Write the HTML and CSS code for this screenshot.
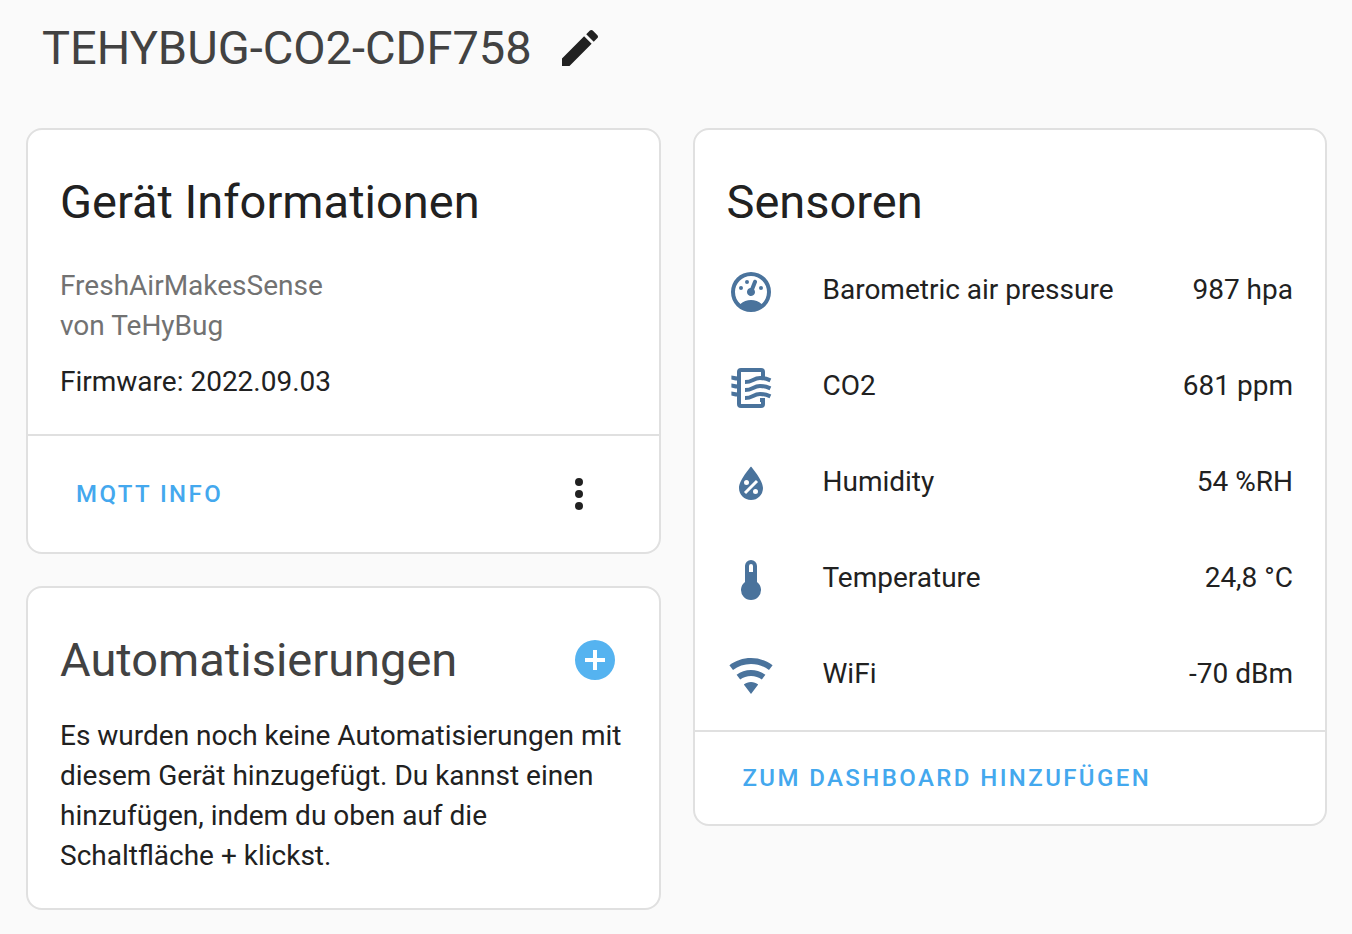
FILE: index.html
```html
<!DOCTYPE html>
<html lang="de">
<head>
<meta charset="utf-8">
<meta name="viewport" content="width=device-width, initial-scale=1">
<title>TEHYBUG-CO2-CDF758</title>
<link rel="stylesheet" href="styles.css">
</head>
<body>
<header class="page-header">
  <h1 class="page-title">TEHYBUG-CO2-CDF758</h1>
  <button class="icon-button" type="button" aria-label="Bearbeiten">
    <svg class="icon" viewBox="0 0 24 24"><path d="M20.71,7.04C21.1,6.65 21.1,6 20.71,5.63L18.37,3.29C18,2.9 17.35,2.9 16.96,3.29L15.12,5.12L18.87,8.87M3,17.25V21H6.75L17.81,9.93L14.06,6.18L3,17.25Z"/></svg>
  </button>
</header>
<main class="columns">
  <div class="column">
    <section class="card">
      <h2 class="card-title">Gerät Informationen</h2>
      <div class="card-content">
        <p class="secondary">FreshAirMakesSense<br>von TeHyBug</p>
        <p class="firmware">Firmware: 2022.09.03</p>
      </div>
      <div class="card-actions device-actions">
        <button class="text-button" type="button">MQTT INFO</button>
        <button class="icon-button menu-button" type="button" aria-label="Menü">
          <svg class="icon" viewBox="0 0 24 24"><path d="M12,16A2,2 0 0,1 14,18A2,2 0 0,1 12,20A2,2 0 0,1 10,18A2,2 0 0,1 12,16M12,10A2,2 0 0,1 14,12A2,2 0 0,1 12,14A2,2 0 0,1 10,12A2,2 0 0,1 12,10M12,4A2,2 0 0,1 14,6A2,2 0 0,1 12,8A2,2 0 0,1 10,6A2,2 0 0,1 12,4Z"/></svg>
        </button>
      </div>
    </section>
    <section class="card">
      <div class="title-row">
        <h2 class="card-title muted">Automatisierungen</h2>
        <button class="icon-button add-button" type="button" aria-label="Automatisierung hinzufügen">
          <svg class="icon" viewBox="0 0 24 24"><path d="M17,13H13V17H11V13H7V11H11V7H13V11H17M12,2A10,10 0 0,0 2,12A10,10 0 0,0 12,22A10,10 0 0,0 22,12A10,10 0 0,0 12,2Z"/></svg>
        </button>
      </div>
      <p class="card-content">Es wurden noch keine Automatisierungen mit diesem Gerät hinzugefügt. Du kannst einen hinzufügen, indem du oben auf die Schaltfläche + klickst.</p>
    </section>
  </div>
  <div class="column">
    <section class="card">
      <h2 class="card-title list-title">Sensoren</h2>
      <ul class="sensors">
        <li class="sensor">
          <svg class="icon" viewBox="0 0 24 24" aria-hidden="true"><path d="M12,2A10,10 0 0,0 2,12A10,10 0 0,0 12,22A10,10 0 0,0 22,12A10,10 0 0,0 12,2M12,4A8,8 0 0,1 20,12C20,14.4 19,16.5 17.3,18C15.9,16.7 14,16 12,16C10,16 8.2,16.7 6.7,18C5,16.5 4,14.4 4,12A8,8 0 0,1 12,4M14,5.89C13.62,5.9 13.26,6.15 13.1,6.54L11.81,9.77L11.71,10C11,10.13 10.41,10.6 10.14,11.26C9.73,12.29 10.23,13.45 11.26,13.86C12.29,14.27 13.45,13.77 13.86,12.74C14.12,12.08 14,11.32 13.57,10.76L13.67,10.5L14.96,7.29L14.97,7.26C15.17,6.75 14.92,6.17 14.41,5.96C14.28,5.91 14.15,5.89 14,5.89M10,6A1,1 0 0,0 9,7A1,1 0 0,0 10,8A1,1 0 0,0 11,7A1,1 0 0,0 10,6M7,9A1,1 0 0,0 6,10A1,1 0 0,0 7,11A1,1 0 0,0 8,10A1,1 0 0,0 7,9M17,9A1,1 0 0,0 16,10A1,1 0 0,0 17,11A1,1 0 0,0 18,10A1,1 0 0,0 17,9Z"/></svg>
          <span class="name">Barometric air pressure</span><span>987 hpa</span>
        </li>
        <li class="sensor">
          <svg class="icon" viewBox="0 0 24 24" aria-hidden="true"><g fill="none" stroke="currentColor" stroke-width="2"><path d="M18,7V4A1,1 0 0,0 17,3H7A1,1 0 0,0 6,4V20A1,1 0 0,0 7,21H17A1,1 0 0,0 18,20V18H16.500"/><path d="M2.200,6.800C3.200,6.800 4,7.300 5.500,7.200M2.200,10.800C3.200,10.800 4,11.300 5.500,11.200M2.200,14.800C3.200,14.800 4,15.300 5.500,15.200"/><path d="M9,9C13,9 13,7 16.500,7C19,7 20,7.400 21.700,8.200M9,13C13,13 13,11 16.500,11C19,11 20,11.400 21.700,12.200M9,17C13,17 13,15 16.500,15C19,15 20,15.400 21.700,16.200"/></g></svg>
          <span class="name">CO2</span><span>681 ppm</span>
        </li>
        <li class="sensor">
          <svg class="icon" viewBox="0 0 24 24" aria-hidden="true"><path d="M12,3.25C12,3.25 6,10 6,14C6,17.32 8.69,20 12,20A6,6 0 0,0 18,14C18,10 12,3.25 12,3.25M14.47,9.97L15.53,11.03L9.53,17.03L8.47,15.97M9.75,10A1.25,1.25 0 0,1 11,11.25A1.25,1.25 0 0,1 9.75,12.5A1.25,1.25 0 0,1 8.5,11.25A1.25,1.25 0 0,1 9.75,10M14.25,14.5A1.25,1.25 0 0,1 15.5,15.75A1.25,1.25 0 0,1 14.25,17A1.25,1.25 0 0,1 13,15.75A1.25,1.25 0 0,1 14.25,14.5Z"/></svg>
          <span class="name">Humidity</span><span>54 %RH</span>
        </li>
        <li class="sensor">
          <svg class="icon" viewBox="0 0 24 24" aria-hidden="true"><path d="M15 13V5A3 3 0 0 0 9 5V13A5 5 0 1 0 15 13M12 4A1 1 0 0 1 13 5V8H11V5A1 1 0 0 1 12 4Z"/></svg>
          <span class="name">Temperature</span><span>24,8 °C</span>
        </li>
        <li class="sensor">
          <svg class="icon" viewBox="0 0 24 24" aria-hidden="true"><path d="M12,21L15.6,16.2C14.6,15.45 13.35,15 12,15C10.65,15 9.4,15.45 8.4,16.2L12,21M12,3C7.95,3 4.21,4.34 1.2,6.6L3,9C5.5,7.12 8.62,6 12,6C15.38,6 18.5,7.12 21,9L22.8,6.6C19.79,4.34 16.05,3 12,3M12,9C9.3,9 6.81,9.89 4.8,11.4L6.6,13.8C8.1,12.67 9.97,12 12,12C14.03,12 15.9,12.67 17.4,13.8L19.2,11.4C17.19,9.89 14.7,9 12,9Z"/></svg>
          <span class="name">WiFi</span><span>-70 dBm</span>
        </li>
      </ul>
      <div class="card-actions">
        <button class="text-button" type="button">ZUM DASHBOARD HINZUFÜGEN</button>
      </div>
    </section>
  </div>
</main>
</body>
</html>
```
FILE: styles.css
```css
* {
  box-sizing: border-box;
}

body {
  margin: 0;
  padding: 0 25px 24px 26px;
  background: #fafafa;
  color: #212121;
  font: 28px/40px Roboto, sans-serif;
}

h1, h2, p, ul {
  margin: 0;
  padding: 0;
}

.page-header {
  display: flex;
  align-items: center;
  gap: 24px;
  height: 128px;
  padding: 0 16px 32px;
}

.page-title,
.card-title {
  font-size: 47px;
  font-weight: 400;
  line-height: 64px;
}

.page-title,
.muted {
  color: #424242;
}

.icon-button {
  display: block;
  padding: 0;
  border: 0;
  background: none;
  color: inherit;
}

.icon {
  display: block;
  flex: none;
  width: 48px;
  height: 48px;
  fill: currentColor;
}

.columns {
  display: grid;
  grid-template-columns: 1fr 1fr;
  gap: 32px;
  align-items: start;
}

.column {
  display: grid;
  gap: 32px;
}

.card {
  border: 2px solid #e0e0e0;
  border-radius: 16px;
  background: #fff;
}

.card-title {
  padding: 40px 32px 32px;
}

.list-title {
  padding-bottom: 16px;
}

.card-content {
  padding: 0 32px 32px;
}

.secondary {
  color: #727272;
}

.firmware {
  margin-top: 16px;
}

.card-actions {
  display: flex;
  align-items: center;
  justify-content: space-between;
  padding: 10px 32px;
  border-top: 2px solid #e0e0e0;
}

.device-actions {
  padding: 22px 32px;
}

.text-button {
  height: 72px;
  padding: 0 16px;
  border: 0;
  background: none;
  color: #44a8ee;
  font: 500 24px/40px Roboto, sans-serif;
  letter-spacing: 0.1em;
}

.menu-button {
  margin-right: 24px;
}

.title-row {
  display: flex;
  align-items: center;
  justify-content: space-between;
}

.title-row .card-title {
  padding-bottom: 24px;
}

.add-button {
  margin: 16px 40px 0 0;
  color: #55b3f0;
}

.sensors {
  list-style: none;
}

.sensor {
  display: flex;
  align-items: center;
  height: 80px;
  margin-bottom: 16px;
  padding: 0 32px;
}

.sensor .icon {
  margin: 4px 48px 0 0;
  color: #4a739c;
}

.name {
  flex: 1;
}
```
